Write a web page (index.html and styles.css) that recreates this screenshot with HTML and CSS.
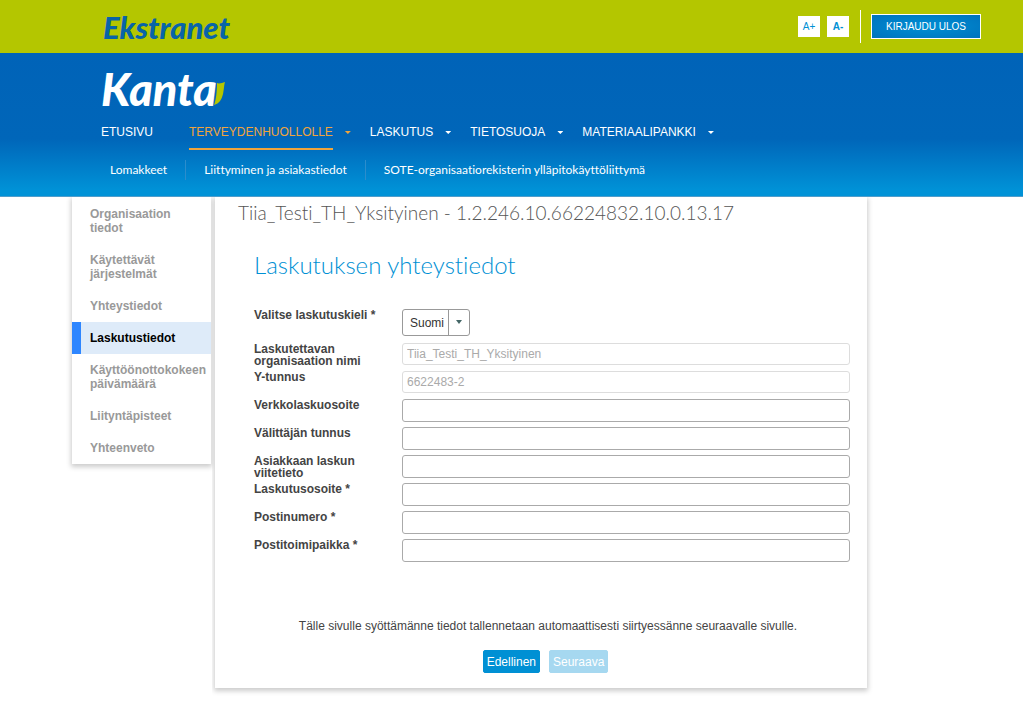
FILE: index.html
```html
<!DOCTYPE html>
<html lang="fi">
<head>
<meta charset="utf-8">
<title>Kanta Ekstranet</title>
<link rel="stylesheet" href="styles.css">
</head>
<body>
<div class="topbar">
  <div class="site-name">Ekstranet</div>
  <div class="tools">
    <button type="button" class="size-btn">A+</button>
    <button type="button" class="size-btn size-btn-small">A-</button>
    <span class="tools-divider"></span>
    <button type="button" class="logout">KIRJAUDU ULOS</button>
  </div>
</div>
<header class="header">
  <a class="logo" href="#"><span class="logo-text">Kanta</span><svg class="leaf" width="11" height="24" viewBox="0 0 11 24" aria-hidden="true"><path d="M3 1C5 2 8 1 11 0C9 6 11 20 0 23C2 18 3 9 3 1Z" fill="#b4c600"/></svg></a>
  <nav class="nav">
    <a class="nav-home" href="#">ETUSIVU</a>
    <a class="current has-menu" href="#"><span>TERVEYDENHUOLLOLLE</span></a>
    <a class="has-menu" href="#"><span>LASKUTUS</span></a>
    <a class="has-menu" href="#"><span>TIETOSUOJA</span></a>
    <a class="has-menu" href="#"><span>MATERIAALIPANKKI</span></a>
  </nav>
  <nav class="subnav">
    <a href="#">Lomakkeet</a>
    <a href="#">Liittyminen ja asiakastiedot</a>
    <a href="#">SOTE-organisaatiorekisterin ylläpitokäyttöliittymä</a>
  </nav>
</header>
<div class="layout">
  <nav class="side">
    <a href="#">Organisaation tiedot</a>
    <a href="#">Käytettävät järjestelmät</a>
    <a href="#">Yhteystiedot</a>
    <a class="active" href="#">Laskutustiedot</a>
    <a href="#">Käyttöönottokokeen päivämäärä</a>
    <a href="#">Liityntäpisteet</a>
    <a href="#">Yhteenveto</a>
  </nav>
  <main class="panel">
    <h1>Tiia_Testi_TH_Yksityinen - 1.2.246.10.66224832.10.0.13.17</h1>
    <form class="form">
      <h2>Laskutuksen yhteystiedot</h2>
      <div class="row row-select">
        <label for="lang">Valitse laskutuskieli *</label>
        <div class="select-wrap">
          <select id="lang"><option>Suomi</option></select>
          <span class="select-arrow"></span>
        </div>
      </div>
      <div class="row"><label for="org">Laskutettavan organisaation nimi</label><input id="org" type="text" value="Tiia_Testi_TH_Yksityinen" disabled></div>
      <div class="row"><label for="yt">Y-tunnus</label><input id="yt" type="text" value="6622483-2" disabled></div>
      <div class="row"><label for="verkko">Verkkolaskuosoite</label><input id="verkko" type="text"></div>
      <div class="row"><label for="val">Välittäjän tunnus</label><input id="val" type="text"></div>
      <div class="row"><label for="viite">Asiakkaan laskun viitetieto</label><input id="viite" type="text"></div>
      <div class="row"><label for="osoite">Laskutusosoite *</label><input id="osoite" type="text"></div>
      <div class="row"><label for="pnro">Postinumero *</label><input id="pnro" type="text"></div>
      <div class="row"><label for="ptp">Postitoimipaikka *</label><input id="ptp" type="text"></div>
      <p class="note">Tälle sivulle syöttämänne tiedot tallennetaan automaattisesti siirtyessänne seuraavalle sivulle.</p>
      <div class="actions">
        <button type="button" class="btn">Edellinen</button>
        <button type="button" class="btn" disabled>Seuraava</button>
      </div>
    </form>
  </main>
</div>
</body>
</html>
```
FILE: styles.css
```css
* {
  box-sizing: border-box;
}

body {
  margin: 0;
  background: #fff;
  color: #444;
  font-family: "Liberation Sans", Arial, sans-serif;
  font-size: 12px;
}

a {
  color: inherit;
  text-decoration: none;
}

button,
input,
select {
  font-family: inherit;
  margin: 0;
}

.topbar {
  display: flex;
  align-items: center;
  justify-content: space-between;
  height: 53px;
  padding: 0 42px 0 103px;
  background: #b4c600;
}

.site-name {
  color: #0864a8;
  font: italic 900 31px/36px Lato, sans-serif;
}

.tools {
  display: flex;
  align-items: center;
  gap: 7px;
}

.size-btn {
  width: 22px;
  height: 21px;
  padding: 0;
  border: 0;
  background: #fff;
  color: #0090d4;
  font-size: 10px;
}

.size-btn-small {
  font-weight: bold;
}

.tools-divider {
  width: 1px;
  height: 33px;
  margin: 0 3px 0 4px;
  background: #fff;
}

.logout {
  height: 25px;
  padding: 0 14px;
  border: 1px solid #fff;
  background: radial-gradient(ellipse, #0090d4, #0072bd);
  color: #fff;
  font-size: 10px;
}

.header {
  height: 144px;
  padding: 12px 42px 0 101px;
  border-bottom: 1px solid #4f9dcb;
  background: linear-gradient(#0063b8 0, #0066b9 60%, #0092d7 96%);
  color: #fff;
}

.logo {
  display: flex;
  align-items: center;
  height: 48px;
}

.logo-text {
  font: italic 900 45px/48px Lato, sans-serif;
}

.leaf {
  margin: 9px 0 0 -3px;
}

.nav {
  display: flex;
  height: 35px;
  margin-top: 2px;
  font-size: 12px;
  line-height: 34px;
}

.nav-home {
  margin-right: 36px;
}

.has-menu {
  display: flex;
  gap: 12px;
  margin-right: 19px;
}

.has-menu::after {
  content: "";
  width: 6px;
  height: 3px;
  margin-top: 16px;
  background: currentColor;
  clip-path: polygon(0 0, 100% 0, 50% 100%);
}

.current {
  color: #f0a43c;
}

.current span {
  border-bottom: 2px solid #f0a43c;
}

.subnav {
  display: flex;
  margin-top: 10px;
  font: 12px/20px Lato, sans-serif;
  font-variant-ligatures: none;
}

.subnav a {
  padding: 0 18px;
  border-left: 1px solid #2c8dcc;
}

.subnav a:first-child {
  padding-left: 9px;
  border-left: 0;
}

.layout {
  display: flex;
  align-items: flex-start;
  gap: 4px;
  max-width: 867px;
  padding: 0 0 14px 72px;
}

.side {
  flex: 0 0 139px;
  padding-top: 1px;
  box-shadow: 0 2px 5px 1px #ccc;
  clip-path: inset(0 -8px -8px -8px);
  background: #fff;
  color: #999;
  font-weight: bold;
  line-height: 14px;
}

.side a {
  display: block;
  padding: 9px 5px 9px 18px;
}

.side .active {
  padding-left: 9px;
  border-left: 9px solid #2e86ff;
  background: #deebf9;
  color: #000;
}

.panel {
  flex: 1;
  min-width: 0;
  background: #fff;
  box-shadow: 0 2px 5px 1px #ccc;
  clip-path: inset(0 -8px -8px -3px);
}

h1,
h2 {
  font-family: Lato, sans-serif;
  font-weight: 300;
  font-variant-ligatures: none;
}

h1 {
  margin: 0;
  padding: 3px 0 0 23px;
  color: #555;
  font-size: 19px;
  line-height: 26px;
}

.form {
  padding: 21px 17px 15px 39px;
}

h2 {
  margin: 0 0 26px;
  color: #0090d4;
  font-size: 24px;
  line-height: 36px;
}

.row {
  display: grid;
  grid-template-columns: 108px 1fr;
  column-gap: 40px;
  align-items: start;
  min-height: 28px;
}

.row label {
  font-weight: bold;
  line-height: 12px;
}

.row-select {
  grid-template-columns: 148px 1fr;
  column-gap: 0;
  min-height: 34px;
}

.row input {
  width: 100%;
  height: 23px;
  padding: 0 4px;
  border: 1px solid #aaa;
  border-radius: 3px;
  background: #fff;
  font-size: 12px;
}

.row input:disabled {
  height: 22px;
  border-color: #ddd;
  color: #aaa;
}

.select-wrap {
  position: relative;
  width: 68px;
  height: 27px;
}

.select-wrap select {
  appearance: none;
  width: 100%;
  height: 100%;
  padding: 0 7px;
  border: 1px solid #999;
  border-radius: 3px;
  background: #fff;
  color: #333;
  font-size: 12px;
}

.select-arrow {
  position: absolute;
  top: 1px;
  right: 1px;
  bottom: 1px;
  width: 21px;
  border-left: 1px solid #999;
  pointer-events: none;
}

.select-arrow::after {
  content: "";
  display: block;
  width: 6px;
  height: 4px;
  margin: 10px auto 0;
  background: #466;
  clip-path: polygon(0 0, 100% 0, 50% 100%);
}

.note {
  margin: 51px 0 16px;
  padding-right: 8px;
  text-align: center;
  line-height: 16px;
}

.actions {
  display: flex;
  justify-content: center;
  gap: 9px;
  padding-right: 13px;
}

.btn {
  height: 23px;
  padding: 0 3px;
  border: 1px solid #0090d4;
  border-radius: 2px;
  background: #0090d4;
  color: #fff;
  font-size: 12px;
}

.btn:disabled {
  border-color: #a6d8f0;
  background: #a6d8f0;
}
```
